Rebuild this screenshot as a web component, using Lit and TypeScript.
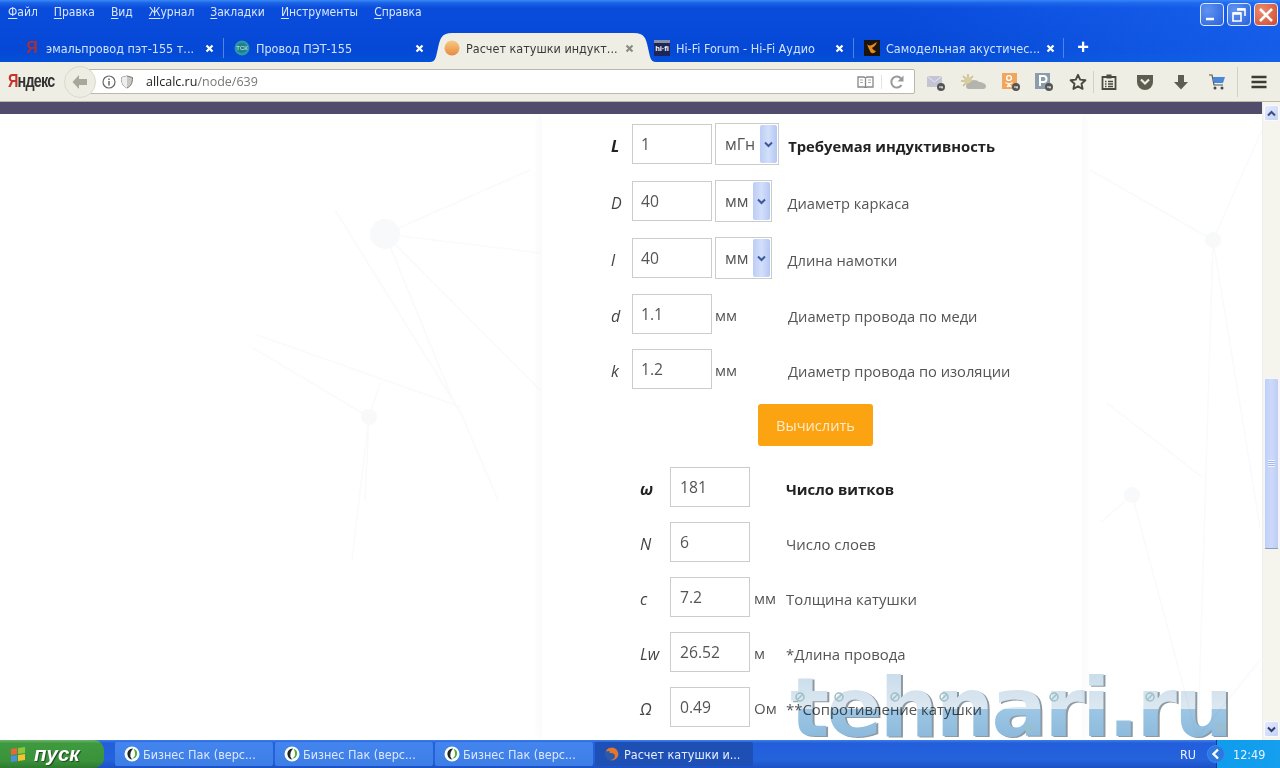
import { LitElement, html, css, svg } from "lit";
import { customElement } from "lit/decorators.js";

const x8 = svg`<path d="M1.500 1.500l6 6M7.500 1.500l-6 6" fill="none" stroke="currentColor" stroke-width="2.200"/>`;

const favicons = [
  html`<span class="fav-ya">Я</span>`,
  html`<svg class="fav" viewBox="0 0 16 16"><circle cx="8" cy="8" r="7.500" fill="#2b96a4"/><circle cx="8" cy="8" r="5" fill="#1f7f8c"/><text x="8" y="10" font-size="6" font-family="Liberation Sans" text-anchor="middle" fill="#d8f4f4">ТСК</text></svg>`,
  html`<svg class="fav" viewBox="0 0 16 16"><defs><linearGradient id="o" x1="0" y1="0" x2="0" y2="1"><stop offset="0" stop-color="#f7c98a"/><stop offset=".55" stop-color="#f0a65c"/><stop offset="1" stop-color="#e58a45"/></linearGradient></defs><circle cx="8" cy="8" r="7.500" fill="url(#o)"/></svg>`,
  html`<svg class="fav" viewBox="0 0 16 16"><rect width="16" height="16" fill="#1c2658"/><rect width="16" height="3" fill="#8a8fa8"/><text x="8" y="11" font-size="7.500" font-weight="700" font-family="Liberation Sans" text-anchor="middle" fill="#fff">hi·fi</text></svg>`,
  html`<svg class="fav" viewBox="0 0 16 16"><rect width="16" height="16" fill="#1a1410"/><path d="M3 4c3 3 5 1 10-2-1 3-3 5-5 6 1 2 3 3 4 3-2 3-5 3-6 0C5 9 4 7 3 4z" fill="#e88a1c"/></svg>`,
];

const tabs = [
  { t: "эмальпровод пэт-155 т..." },
  { t: "Провод ПЭТ-155", noline: true },
  { t: "Расчет катушки индукт...", active: true, noline: true },
  { t: "Hi-Fi Forum - Hi-Fi Аудио" },
  { t: "Самодельная акустичес..." },
];

const menu = [
  ["Ф", "айл"], ["П", "равка"], ["В", "ид"], ["Ж", "урнал"],
  ["З", "акладки"], ["И", "нструменты"], ["С", "правка"],
];

const inputs = [
  { s: "L", v: "1", sel: "мГн", label: "Требуемая индуктивность", strong: true },
  { s: "D", v: "40", sel: "мм", label: "Диаметр каркаса" },
  { s: "l", v: "40", sel: "мм", label: "Длина намотки" },
  { s: "d", v: "1.1", unit: "мм", label: "Диаметр провода по меди" },
  { s: "k", v: "1.2", unit: "мм", label: "Диаметр провода по изоляции" },
];

const results = [
  { s: "ω", v: "181", unit: "", label: "Число витков", strong: true },
  { s: "N", v: "6", unit: "", label: "Число слоев" },
  { s: "c", v: "7.2", unit: "мм", label: "Толщина катушки" },
  { s: "Lw", v: "26.52", unit: "м", label: "*Длина провода" },
  { s: "Ω", v: "0.49", unit: "Ом", label: "**Сопротивление катушки" },
];

const netLines = [
  [385,234,530,170],[385,234,540,253],[385,234,540,390],[335,210,461,413],[461,413,498,500],[385,234,453,400],
  [369,417,380,383],[253,348,369,417],[257,335,461,407],[369,417,365,500],[369,417,352,560],
  [1132,495,1100,523],[1132,495,1197,737],[1107,403,1202,477],[1213,240,1198,737],[1213,240,1260,527],
  [1213,240,1090,170],[1213,240,1262,130],[1198,737,1260,660],
];
const netNodes = [[385,234,15],[369,417,8],[1213,240,8],[1132,495,8]];
const marks = [[800,697],[839,697],[895,697],[944,697],[1054,697],[1150,697],[1029,728],[1221,728]];

@customElement("app-root")
export class AppRoot extends LitElement {
  static styles = css`
    :host { display: block; width: 1280px; height: 768px; overflow: hidden; position: relative; font-family: "Open Sans", sans-serif; }
    .app { display: flex; flex-direction: column; width: 1280px; height: 768px; background: #fff; }

    .chrome { height: 62px; flex: none; display: flex; flex-direction: column; background: linear-gradient(180deg, #3a8af5 0, #1a62e6 3px, #0a4cdc 8px, #0548d6 50px, #0350d8 62px); position: relative; }
    .chrome::after { content: ""; position: absolute; inset: 0; background: linear-gradient(90deg, transparent 70%, rgba(40,120,255,.45) 100%); pointer-events: none; }
    .titlebar { height: 33px; flex: none; box-sizing: border-box; display: flex; align-items: flex-start; padding: 3px 2px 0 8px; position: relative; z-index: 1; }
    .menu { display: flex; gap: 16px; font: 12px "DejaVu Sans Condensed", "Noto Sans", sans-serif; color: #dbe7ff; padding-top: 2px; }
    .menu u { text-underline-offset: 2px; }
    .winbtns { margin-left: auto; display: flex; gap: 3px; }
    .winbtn { width: 24px; height: 23px; box-sizing: border-box; border: 1px solid #dfe9ff; border-radius: 4px; background: radial-gradient(circle at 30% 30%, #5f93f2, #2a62dc); display: flex; align-items: center; justify-content: center; }
    .winbtn.close { background: radial-gradient(circle at 30% 30%, #ec8a6e, #cf4a2c); }
    .winbtn svg { width: 18px; height: 18px; display: block; }

    .tabs { flex: 1; display: flex; align-items: stretch; padding-left: 14px; position: relative; z-index: 2; }
    .tab { width: 210px; flex: none; box-sizing: border-box; display: flex; align-items: center; padding: 1px 9px 0 10px; gap: 6px; color: #cfe3ff; font: 12.5px "DejaVu Sans Condensed", "Noto Sans", sans-serif; position: relative; height: 29px; }
    .tab.sep::after { content: ""; position: absolute; right: 0; top: 5px; height: 20px; width: 1px; background: #4f86e6; }
    .tab span.txt { flex: 1; white-space: nowrap; position: relative; }
    .tab .x { width: 9px; height: 9px; flex: none; color: #fff; margin-right: 1px; position: relative; }
    .tab.active { color: #3a3a3a; }
    .tab.active .x { color: #8b8b86; }
    .tabshape { position: absolute; left: -4px; top: 0; width: 226px; height: 29px; }
    .fav, .fav-ya { width: 16px; height: 16px; flex: none; display: block; position: relative; }
    .fav-ya { color: #ab2f33; font: 700 16px/16px "Liberation Sans", sans-serif; text-align: center; }
    .plus { width: 36px; display: flex; align-items: center; justify-content: center; color: #fff; font: 700 20px "Liberation Sans", sans-serif; padding-left: 2px; box-sizing: border-box; }

    .toolbar { height: 40px; flex: none; box-sizing: border-box; display: flex; align-items: center; background: #efeee4; border-bottom: 1px solid #bdb9aa; padding-left: 8px; position: relative; }
    .logo { width: 56px; flex: none; font: 700 18px "Liberation Sans", sans-serif; letter-spacing: -1px; color: #333; transform: scaleX(.8); transform-origin: left; }
    .logo b { color: #c8322a; }
    .back { width: 32px; height: 32px; flex: none; box-sizing: border-box; border: 1px solid #dcd9cc; border-radius: 50%; background: #eeede3; display: flex; align-items: center; justify-content: center; position: relative; z-index: 1; }
    .urlbar { width: 835px; height: 25px; flex: none; box-sizing: border-box; margin-left: -16px; border: 1px solid #bbb8aa; border-radius: 0 2px 2px 0; background: #fff; display: flex; align-items: center; padding-left: 21px; }
    .urlbar .ic { flex: none; width: 14px; height: 14px; display: block; }
    .urlbar .ic + .ic { margin-left: 4px; }
    .url { margin-left: 12px; font: 12.5px "Open Sans", sans-serif; color: #222; }
    .url span { color: #777; }
    .urlend { margin-left: auto; display: flex; align-items: center; height: 100%; }
    .urlend svg { display: block; }
    .urlend .rd { margin-right: 7px; }
    .urlend .rl { border-left: 1px solid #e6e4da; padding: 0 10px 0 8px; }
    .tb { display: block; flex: none; width: 18px; height: 18px; }
    .tb.w { width: 28px; }
    .tbs { display: flex; align-items: center; margin-left: 3px; flex: 1; }
    .tbs .slot { display: flex; justify-content: center; flex: none; }
    .slot.s36 { width: 36px; }
    .slot.s40 { width: 40px; }
    .slot.s34 { width: 34px; }
    .slot.s32 { width: 32px; }
    .slot.s30 { width: 30px; }
    .slot.s42 { width: 42px; }
    .slot.ml3 { margin-left: 3px; }
    .vsep { width: 1px; height: 22px; background: #d4d1c4; flex: none; }
    .vsep.a { margin-left: -3px; }
    .vsep.b { margin-left: 2px; height: 30px; }

    .body { flex: 1; min-height: 0; display: flex; }
    .main { flex: 1; min-width: 0; display: flex; flex-direction: column; }
    .band { height: 12px; flex: none; background: #524c6c; }
    .page { flex: 1; min-height: 0; position: relative; overflow: hidden; background: #fff; }
    .net { position: absolute; left: 0; top: 0; width: 1262px; height: 626px; }
    .card { position: relative; margin-left: 542px; width: 540px; height: 100%; box-sizing: border-box; background: #fff; box-shadow: 0 0 12px rgba(60,60,70,.05); padding-top: 9px; display: flex; flex-direction: column; gap: 15px; }
    .row { display: flex; align-items: center; color: #555; font-size: 15px; }
    .row.in { padding-left: 69px; }
    .row.out { padding-left: 99px; }
    .sym { font-style: italic; color: #444; padding-top: 4px; line-height: 20px; font-size: 16px; }
    .in .sym { width: 21px; }
    .out .sym { width: 29px; margin-left: -1px; padding-right: 1px; }
    .sym.b { font-weight: 700; color: #222; }
    input { width: 80px; height: 40px; box-sizing: border-box; border: 1px solid #ccc; background: #fff; padding: 0 0 0 8px; margin: 0; font: 15.7px "Open Sans", sans-serif; color: #555; border-radius: 0; outline: none; }
    .out input { padding-left: 9px; }
    .unit { color: #555; font-size: 15px; line-height: 20px; padding-top: 1px; }
    .in .unit { width: 76px; padding-left: 3px; box-sizing: border-box; }
    .out .unit { width: 36px; padding-left: 4px; box-sizing: border-box; }
    .sel { height: 42px; box-sizing: border-box; margin-left: 3px; border: 1px solid #ccc; padding: 1px 1px 1px 9px; display: flex; align-items: stretch; gap: 5px; background: #fff; color: #555; font-size: 16px; }
    .sel .val { align-self: center; padding-bottom: 1px; }
    .sel .arr { width: 17px; background: linear-gradient(90deg, #bccdf5, #d3dffa 50%, #b4c7f4); border-radius: 2px; display: flex; align-items: center; justify-content: center; }
    .sel.wide { margin-right: 9px; }
    .sel.nar { margin-right: 15px; }
    .lab { padding-top: 4px; color: #555; line-height: 20px; white-space: nowrap; }
    .in .lab { font-size: 14.7px; }
    .out .lab { font-size: 14.9px; }
    .lab.b { font-weight: 700; color: #222; }
    .in .lab.b { font-size: 14.8px; }
    .btnrow { display: flex; padding-left: 216px; margin-bottom: 6px; }
    .btn { width: 115px; height: 42px; border: none; border-radius: 3px; background: #fca311; color: #ffeccb; font: 14.600px "Open Sans", sans-serif; padding: 0; }

    .scroll { width: 18px; flex: none; box-sizing: border-box; background: #f5f5ee; display: flex; flex-direction: column; align-items: stretch; padding: 3px 1px 3px; border-left: 1px solid #eee; }
    .sb { height: 16px; flex: none; background: linear-gradient(135deg, #e4ebfd, #c4d2f6); border-radius: 2px; display: flex; align-items: center; justify-content: center; border: 1px solid #f8faff; box-sizing: border-box; }
    .thumb { height: 171px; margin-top: 257px; flex: none; box-sizing: border-box; background: linear-gradient(90deg, #c0d0f6, #ccd9fa 50%, #bccdf5); border-radius: 2px; border: 1px solid #f4f7ff; border-bottom-color: #8b9cc0; display: flex; align-items: center; justify-content: center; }
    .grip { width: 7px; height: 7px; background: repeating-linear-gradient(180deg, #eef3ff 0 1px, #a8bbe8 1px 2px); }
    .sb.down { margin-top: auto; }

    .taskbar { height: 28px; flex: none; display: flex; align-items: center; background: linear-gradient(180deg, #3c80e8 0, #245edb 3px, #2463dc 20px, #1c50c4 28px); position: relative; }
    .start { width: 104px; height: 28px; flex: none; box-sizing: border-box; border-radius: 0 10px 10px 0; background: linear-gradient(180deg, #6db36d 0, #3f9a3f 12%, #3a923a 75%, #2d7a2d 100%); display: flex; align-items: center; padding-left: 10px; gap: 7px; color: #fff; font: italic 700 20.500px "Liberation Sans", sans-serif; text-shadow: 1px 1px 1px #1c4a1c; }
    .start svg { width: 17px; height: 17px; display: block; }
    .tasks { display: flex; gap: 2px; margin-left: 11px; }
    .task { width: 158px; height: 24px; box-sizing: border-box; background: linear-gradient(180deg, #4484ee, #3c7ee6); border-radius: 2px; color: #dce8ff; font: 12.5px "DejaVu Sans Condensed", "Noto Sans", sans-serif; display: flex; align-items: center; padding-left: 9px; gap: 3px; white-space: nowrap; }
    .task.on { background: #1e4fb5; color: #e6eeff; gap: 4px; }
    .task svg { width: 16px; height: 16px; flex: none; display: block; }
    .tray { margin-left: auto; width: 100px; height: 28px; flex: none; box-sizing: border-box; display: flex; align-items: center; color: #e8f2ff; font: 12.5px "DejaVu Sans Condensed", "Noto Sans", sans-serif; background: linear-gradient(90deg, transparent 0 36px, #12329a 36px 37px, #0e9cec 37px, #159fee 100%); }
    .tray .ru { width: 27px; }
    .tray .cir { width: 18px; height: 18px; flex: none; display: block; }
    .tray .tm { margin-left: 8px; }

    .mark { position: absolute; left: 790px; top: 668px; width: 450px; height: 72px; mix-blend-mode: multiply; pointer-events: none; filter: drop-shadow(2px 1px 0 #8e9aa3); }
    .mark span { display: block; font: 700 82px/80px "DejaVu Sans", sans-serif; letter-spacing: -2.500px; white-space: nowrap; color: transparent; background: linear-gradient(180deg, #c6dbea 0, #dde8f1 41px, #9cc6e4 41px, #8dbadc 70px); -webkit-background-clip: text; background-clip: text; }
    .marks { position: absolute; left: 790px; top: 660px; width: 450px; height: 80px; pointer-events: none; }
  `;

  private toolIcon(i: number) {
    const key = svg`<circle cx="14" cy="14" r="4" fill="#555"/><path d="M12 14h4M15 14v1.500" stroke="#fff" stroke-width="1"/>`;
    switch (i) {
      case 0: return html`<svg class="tb" viewBox="0 0 18 18"><rect x="0" y="3" width="15" height="11" fill="#c3c4d4"/><path d="M0 3l7.500 6L15 3" fill="none" stroke="#e8e8f0"/>${key}</svg>`;
      case 1: return html`<svg class="tb w" viewBox="0 0 28 18"><g stroke="#c9b98a" stroke-width="1.500"><path d="M8 1v14M1 8h14M3 3l10 10M13 3L3 13"/></g><circle cx="8" cy="8" r="4" fill="#d8cba0"/><path d="M9 16c-2 0-3-1-3-3s2-3 4-3c1-3 7-4 9-1 3 0 7 2 7 4s-1 3-3 3z" fill="#b4b4ae"/></svg>`;
      case 2: return html`<svg class="tb" viewBox="0 0 18 18"><rect x="0" y="0" width="15" height="16" fill="#f2a55c"/><circle cx="7" cy="5" r="2.400" fill="none" stroke="#fff" stroke-width="1.400"/><path d="M3.500 9.500c2 1.500 5 1.500 7 0M7 11v3M5 14l2-3 2 3" fill="none" stroke="#fff" stroke-width="1.300"/>${key}</svg>`;
      case 3: return html`<svg class="tb" viewBox="0 0 18 18"><rect x="0" y="0" width="15" height="16" fill="#8d9caa"/><path d="M5 13V3h3.500a3 3 0 010 6H5" fill="none" stroke="#fff" stroke-width="2"/>${key}</svg>`;
      case 4: return html`<svg class="tb" viewBox="0 0 18 18"><path d="M9 1.800l2.200 4.800 5.200.6-3.900 3.500 1.100 5.200L9 13.300l-4.600 2.600 1.100-5.200L1.600 7.200l5.200-.6z" fill="none" stroke="#4a4a42" stroke-width="1.900" stroke-linejoin="round"/></svg>`;
      case 5: return html`<svg class="tb" viewBox="0 0 18 18"><path d="M2.500 4h13v12h-13z" fill="none" stroke="#4a4a42" stroke-width="1.800"/><rect x="6.500" y="1.500" width="5" height="4" fill="#4a4a42"/><path d="M5 8.500h1.500M8 8.500h5M5 11h1.500M8 11h5M5 13.500h1.500M8 13.500h5" stroke="#4a4a42" stroke-width="1.300"/></svg>`;
      case 6: return html`<svg class="tb" viewBox="0 0 18 18"><path d="M1 2h16v7a8 8 0 01-16 0z" fill="#5d5d52"/><path d="M5 6.500l4 4 4-4" fill="none" stroke="#efeee4" stroke-width="2.200"/></svg>`;
      case 7: return html`<svg class="tb" viewBox="0 0 18 18"><path d="M6 2h6v7h4l-7 7.500L2 9h4z" fill="#5d5d52"/></svg>`;
      case 8: return html`<svg class="tb" viewBox="0 0 18 18"><path d="M1 2h3l2 10h9" fill="none" stroke="#555" stroke-width="1.200"/><path d="M4.500 4H17l-2 6H6z" fill="#4a87d8"/><circle cx="7" cy="15" r="1.500" fill="#445"/><circle cx="14" cy="15" r="1.500" fill="#445"/></svg>`;
      default: return html`<svg class="tb" viewBox="0 0 18 18"><path d="M1.500 4h15M1.500 9h15M1.500 14h15" stroke="#3c3c34" stroke-width="2.400"/></svg>`;
    }
  }

  private chev(color: string, up = false) {
    return html`<svg width="9" height="7" viewBox="0 0 9 7"><path d=${up ? "M1 5.500l3.500-3.500L8 5.500" : "M1 1.500L4.500 5 8 1.500"} fill="none" stroke=${color} stroke-width="2"/></svg>`;
  }

  private bizIcon() {
    return html`<svg viewBox="0 0 16 16"><circle cx="8" cy="8" r="7.500" fill="#fff"/><path d="M9 2.500C5 2.500 3 5.500 3.500 9c.4 2.500 2.500 4.500 5 4.500-2-1.500-2.500-3.500-2-6 .4-2 1.500-3.500 2.500-5z" fill="#1e2a1e"/><path d="M9.500 3c3 .5 4 3 3.500 5.500-.5 2.500-2.500 4.500-5 4 2-1 3-2.500 3-4.500S10.500 4.500 9.500 3z" fill="#4db03c"/></svg>`;
  }

  render() {
    return html`<div class="app">
      <div class="chrome">
        <div class="titlebar">
          <div class="menu">${menu.map(([a, b]) => html`<span><u>${a}</u>${b}</span>`)}</div>
          <div class="winbtns">
            <div class="winbtn"><svg viewBox="0 0 18 18"><path d="M3 13h8" stroke="#fff" stroke-width="2.500"/></svg></div>
            <div class="winbtn"><svg viewBox="0 0 18 18"><path d="M7 3h8v7M3 7h8v8H3z" fill="none" stroke="#fff" stroke-width="1.600"/><path d="M3 7.500h8M7 3.500h8" stroke="#fff" stroke-width="2.500"/></svg></div>
            <div class="winbtn close"><svg viewBox="0 0 18 18"><path d="M3 3l12 12M15 3L3 15" stroke="#fff" stroke-width="2.600"/></svg></div>
          </div>
        </div>
        <div class="tabs">
          ${tabs.map((t, i) => html`<div class="tab ${t.active ? "active" : ""} ${t.noline ? "" : "sep"}">
            ${t.active ? html`<svg class="tabshape" viewBox="0 0 226 29"><path d="M0 29c6 0 6-6 8-14C10 5 12 0 22 0h182c10 0 12 5 14 15 2 8 2 14 8 14z" fill="#efeee4"/></svg>` : ""}
            ${favicons[i]}<span class="txt">${t.t}</span>
            <svg class="x" viewBox="0 0 9 9">${x8}</svg>
          </div>`)}
          <div class="plus">+</div>
        </div>
      </div>

      <div class="toolbar">
        <div class="logo"><b>Я</b>ндекс</div>
        <div class="back"><svg width="18" height="16" viewBox="0 0 18 16"><path d="M8 1L1.500 8 8 15v-4h8V5H8z" fill="#a9a69a"/></svg></div>
        <div class="urlbar">
          <svg class="ic" viewBox="0 0 14 14"><circle cx="7" cy="7" r="6" fill="none" stroke="#666" stroke-width="1.200"/><path d="M7 6v4.500M7 3.500v1.500" stroke="#666" stroke-width="1.500"/></svg>
          <svg class="ic" viewBox="0 0 14 14"><path d="M7 1l5.500 1.500c0 5-1 8.500-5.500 10.500C2.500 11 1.500 7.500 1.500 2.500z" fill="#c8c8c0" stroke="#777"/><path d="M7 1v12C2.500 11 1.500 7.500 1.500 2.500z" fill="#eee"/></svg>
          <div class="url">allcalc.ru<span>/node/639</span></div>
          <div class="urlend">
            <svg class="rd" width="17" height="12" viewBox="0 0 17 12"><path d="M1 1h6l1.500 1L10 1h6v10h-6l-1.500 1L7 11H1zM8.500 2v9" fill="none" stroke="#888" stroke-width="1.300"/><path d="M3 4h3M3 6.500h3M11 4h3M11 6.500h3" stroke="#aaa"/></svg>
            <div class="rl"><svg width="14" height="14" viewBox="0 0 14 14"><path d="M11.500 10A5.500 5.500 0 1 1 11 3.500" fill="none" stroke="#999" stroke-width="2"/><path d="M13.500 .5v6h-6z" fill="#999"/></svg></div>
          </div>
        </div>
        <div class="tbs">
          <div class="slot s36">${this.toolIcon(0)}</div>
          <div class="slot s40">${this.toolIcon(1)}</div>
          <div class="slot s34">${this.toolIcon(2)}</div>
          <div class="slot s32">${this.toolIcon(3)}</div>
          <div class="slot s36">${this.toolIcon(4)}</div>
          <div class="vsep a"></div>
          <div class="slot s30">${this.toolIcon(5)}</div>
          <div class="slot s36 ml3">${this.toolIcon(6)}</div>
          <div class="slot s36">${this.toolIcon(7)}</div>
          <div class="slot s36">${this.toolIcon(8)}</div>
          <div class="vsep b"></div>
          <div class="slot s42">${this.toolIcon(9)}</div>
        </div>
      </div>

      <div class="body">
        <div class="main">
          <div class="band"></div>
          <div class="page">
            <svg class="net" viewBox="0 114 1262 626">
              ${netLines.map(([a, b, c, d]) => svg`<line x1=${a} y1=${b} x2=${c} y2=${d} stroke="#fafafb" stroke-width="1.500"/>`)}
              ${netNodes.map(([a, b, r]) => svg`<circle cx=${a} cy=${b} r=${r} fill="#f8f9fa"/>`)}
            </svg>
            <div class="card">
              ${inputs.map((r) => html`<div class="row in">
                <div class="sym ${r.strong ? "b" : ""}">${r.s}</div>
                <input .value=${r.v} readonly />
                ${r.sel
                  ? html`<div class="sel ${r.strong ? "wide" : "nar"}"><span class="val">${r.sel}</span><span class="arr">${this.chev("#3b5a9c")}</span></div>`
                  : html`<div class="unit">${r.unit}</div>`}
                <div class="lab ${r.strong ? "b" : ""}">${r.label}</div>
              </div>`)}
              <div class="btnrow"><button class="btn">Вычислить</button></div>
              ${results.map((r) => html`<div class="row out">
                <div class="sym ${r.strong ? "b" : ""}">${r.s}</div>
                <input .value=${r.v} readonly />
                <div class="unit">${r.unit}</div>
                <div class="lab ${r.strong ? "b" : ""}">${r.label}</div>
              </div>`)}
            </div>
          </div>
        </div>
        <div class="scroll">
          <div class="sb">${this.chev("#3b4f80", true)}</div>
          <div class="thumb"><div class="grip"></div></div>
          <div class="sb down">${this.chev("#2f3f70")}</div>
        </div>
      </div>

      <div class="taskbar">
        <div class="start">
          <svg viewBox="0 0 17 17"><path d="M1 3l6-1v6l-6 1z" fill="#e8663a"/><path d="M8 2l7-1v6l-7 1z" fill="#8cc63f"/><path d="M1 10l6-1v6l-6 1z" fill="#4a90e0"/><path d="M8 9l7-1v6l-7 1z" fill="#f4c430"/></svg>
          <span>пуск</span>
        </div>
        <div class="tasks">
          ${[0, 1, 2].map(() => html`<div class="task">${this.bizIcon()}<span>Бизнес Пак (верс...</span></div>`)}
          <div class="task on"><svg viewBox="0 0 16 16"><circle cx="8" cy="8" r="7" fill="#2c5aa8"/><path d="M2 5c1-3 5-4 8-3 3 1 5 5 4 8-1 3-5 5-8 4 3 0 5-2 5-4s-2-3-4-3-2-1-1-2c-2 0-3 1-4 0z" fill="#e8762a"/></svg><span>Расчет катушки и...</span></div>
        </div>
        <div class="tray">
          <span class="ru">RU</span>
          <svg class="cir" viewBox="0 0 18 18"><circle cx="9" cy="9" r="9" fill="#3f8ae8"/><circle cx="9" cy="9" r="8" fill="#2a78e0"/><path d="M11 4.500L6.500 9l4.500 4.500" fill="none" stroke="#fff" stroke-width="2.400"/></svg>
          <span class="tm">12:49</span>
        </div>
      </div>
    </div>
    <div class="mark"><span>tehnari.ru</span></div>
    <svg class="marks" viewBox="790 660 450 80">
      ${marks.map(([a, b]) => svg`<g fill="none" stroke="#9cc0c4" stroke-width="1.500"><circle cx=${a} cy=${b} r="4"/><line x1=${a - 3} y1=${b + 3} x2=${a + 3} y2=${b - 3}/></g>`)}
    </svg>`;
  }
}
